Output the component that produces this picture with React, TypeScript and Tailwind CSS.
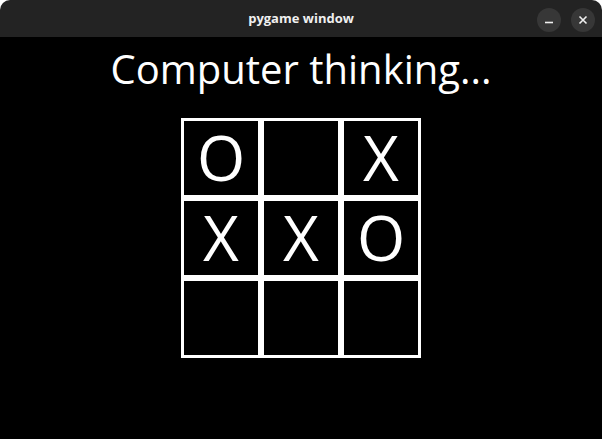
const board = ["O", "", "X", "X", "X", "O", "", "", ""];

function TitleBar() {
  return (
    <div className="relative flex h-[37px] items-center justify-center rounded-t-[10px] bg-[#232323]">
      <span className="font-['Open_Sans',sans-serif] text-[13px] font-bold text-[#f0f0f0]">
        pygame window
      </span>
      <div className="absolute right-[7px] top-[8px] flex gap-[10px]">
        <button className="flex h-[24px] w-[24px] items-center justify-center rounded-full bg-[#373737]">
          <svg width="10" height="10" viewBox="0 0 10 10">
            <path d="M1 7.5h8" stroke="#f0f0f0" strokeWidth="1.6" />
          </svg>
        </button>
        <button className="flex h-[24px] w-[24px] items-center justify-center rounded-full bg-[#373737]">
          <svg width="10" height="10" viewBox="0 0 10 10">
            <path d="M1.5 1.5l7 7M8.5 1.5l-7 7" stroke="#f0f0f0" strokeWidth="1.6" />
          </svg>
        </button>
      </div>
    </div>
  );
}

export default function App() {
  return (
    <div className="h-[439px] w-[602px] overflow-hidden bg-white">
      <TitleBar />
      <div className="flex h-[402px] flex-col items-center bg-black">
        <h1 className="mt-[2px] font-['Open_Sans',sans-serif] text-[40px] leading-[60px] text-white">
          Computer thinking...
        </h1>
        <div className="mt-[19px] grid grid-cols-[repeat(3,80px)]">
          {board.map((cell, i) => (
            <div
              key={i}
              className="flex h-[80px] w-[80px] items-center justify-center border-[3px] border-white pb-[2px] font-['Open_Sans',sans-serif] text-[62px] leading-none text-white"
            >
              {cell}
            </div>
          ))}
        </div>
      </div>
    </div>
  );
}
